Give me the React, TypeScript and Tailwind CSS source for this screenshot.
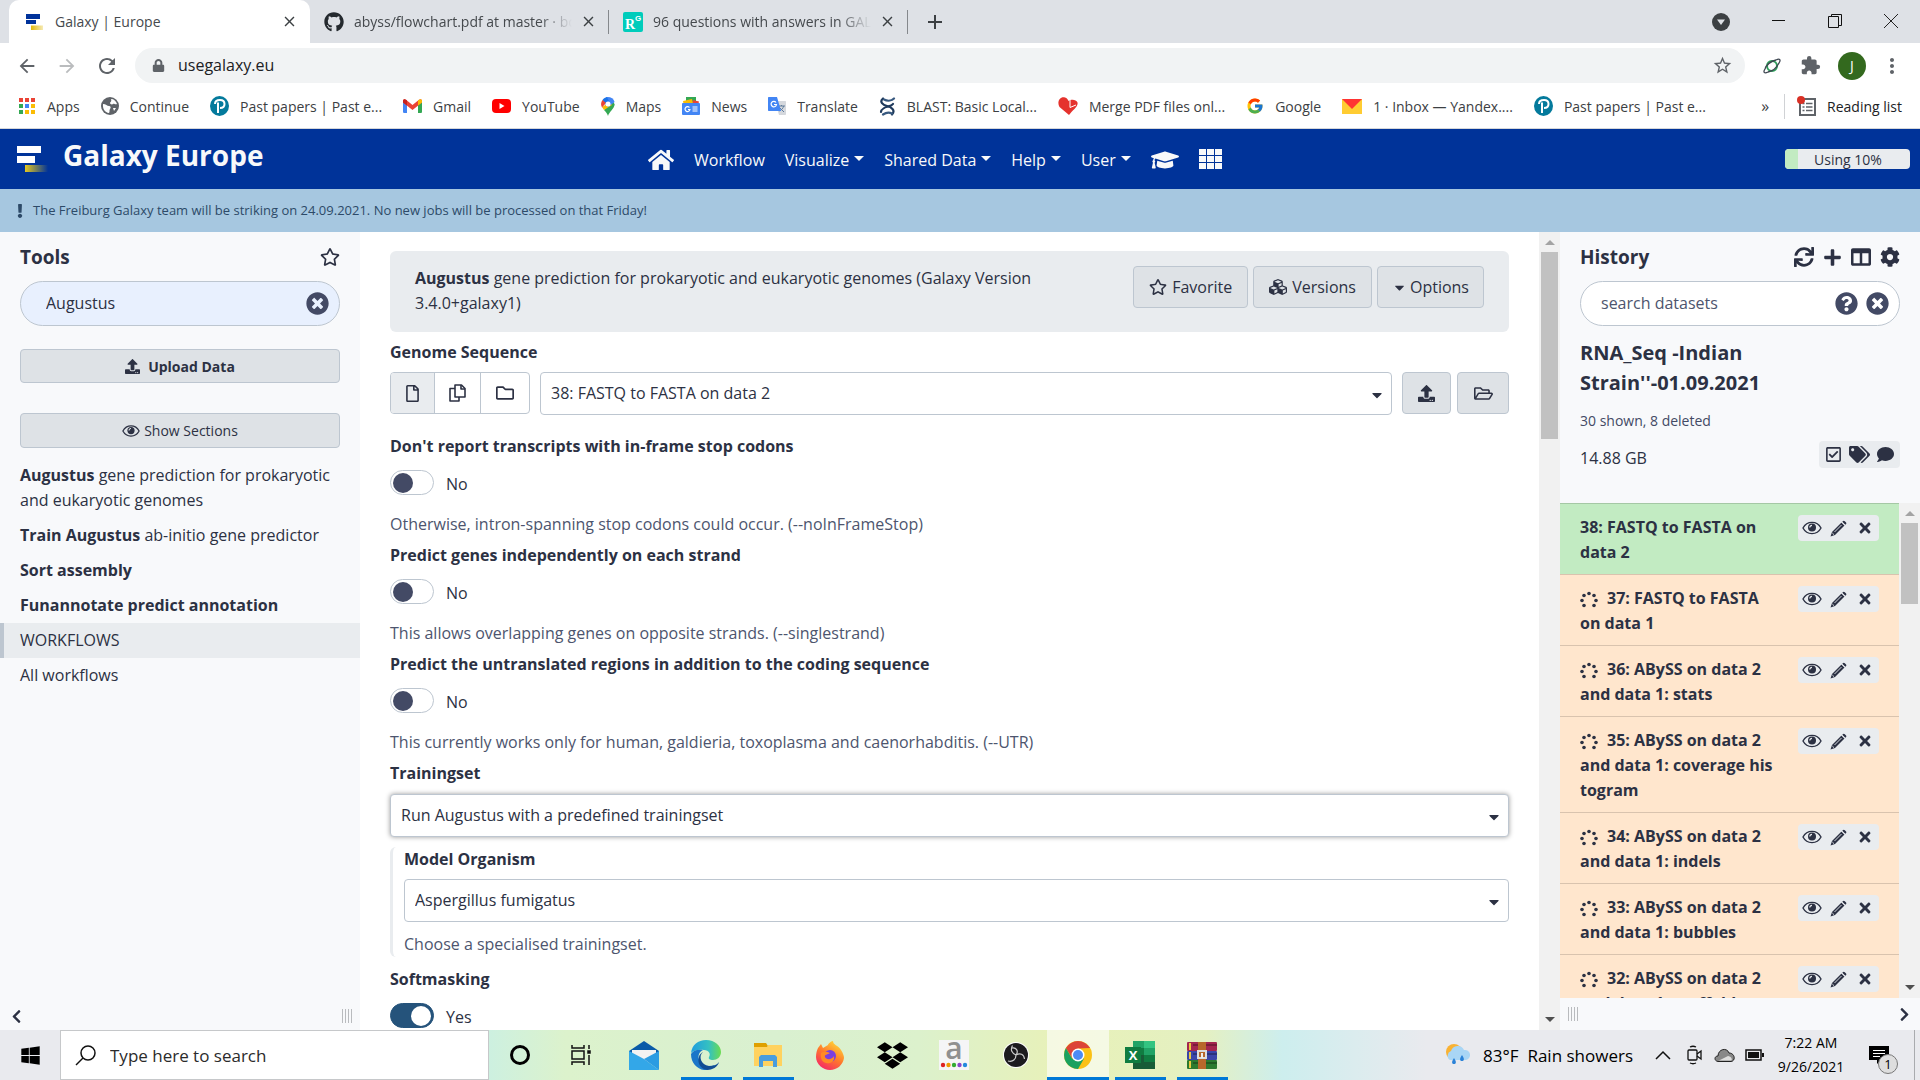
import type { ReactNode } from "react";
import {
  FaCaretDown,
  FaChevronLeft,
  FaChevronRight,
  FaCog,
  FaColumns,
  FaComment,
  FaCubes,
  FaDropbox,
  FaExclamation,
  FaGithub,
  FaGraduationCap,
  FaHome,
  FaLock,
  FaPlus,
  FaQuestionCircle,
  FaRegCheckSquare,
  FaRegFile,
  FaRegFolder,
  FaRegFolderOpen,
  FaRegStar,
  FaSync,
  FaTags,
  FaTimes,
  FaTimesCircle,
  FaUpload,
  FaWindows,
} from "react-icons/fa";
import { FcGoogle } from "react-icons/fc";
import {
  MdArrowBack,
  MdArrowForward,
  MdClose,
  MdExtension,
  MdMoreVert,
  MdRefresh,
  MdStarBorder,
} from "react-icons/md";

/* ---------- browser icons ---------- */

function Favicon() {
  return (
    <svg width="18" height="18" viewBox="0 0 18 18">
      <defs>
        <linearGradient id="fav" x1="0" x2="1">
          <stop offset="0" stopColor="#e0b90c" />
          <stop offset="1" stopColor="#e0b90c" stopOpacity="0.3" />
        </linearGradient>
      </defs>
      <path fill="#00329b" d="M1 1h14v5H1zM1 7h10v4H1z" />
      <path fill="url(#fav)" d="M6 12.500h12v4.500H6z" />
    </svg>
  );
}

function ResearchGate() {
  return (
    <svg width="20" height="20" viewBox="0 0 20 20">
      <rect width="20" height="20" rx="2" fill="#00ccbb" />
      <text x="2" y="17" fontSize="14" fontWeight="700" fontFamily="Liberation Serif, serif" fill="#fff">R</text>
      <text x="12" y="9" fontSize="8" fontWeight="700" fontFamily="Liberation Sans, sans-serif" fill="#fff">G</text>
    </svg>
  );
}

function AppsIcon() {
  const colors = ["#ea4335", "#ea4335", "#ea4335", "#34a853", "#4285f4", "#fbbc04", "#34a853", "#fbbc04", "#fbbc04"];
  return (
    <svg width="18" height="18" viewBox="0 0 18 18">
      {colors.map((c, i) => (
        <rect key={i} x={1 + (i % 3) * 6} y={1 + Math.floor(i / 3) * 6} width="4" height="4" fill={c} />
      ))}
    </svg>
  );
}

function GlobeIcon() {
  return (
    <svg width="18" height="18" viewBox="0 0 18 18">
      <circle cx="9" cy="9" r="9" fill="#5f6368" />
      <path fill="#fff" d="M2 7c3 0 4 2 6 2s2 2 1 3 0 3-1 4C4 15.500 1.500 12 2 7zM10 2c3 0 5 2 6 5-2 1-3-1-4 0s-3 0-3-1 2-1 1-4zM12 11l3 0-2 3z" />
    </svg>
  );
}

function PearsonIcon() {
  return (
    <svg width="19" height="20" viewBox="0 0 19 20">
      <ellipse cx="9.500" cy="10" rx="9.500" ry="10" fill="#047a9c" />
      <path fill="none" stroke="#fff" strokeWidth="2" d="M8 17V6.500M5 8c0-3 2-4 5-4s4.500 1.500 4.500 4-2 4-4.500 4" />
    </svg>
  );
}

function GmailIcon() {
  return (
    <svg width="19" height="14" viewBox="0 0 19 14">
      <path fill="#4285f4" d="M0 2v10.500C0 13.500.5 14 1.500 14H4V5z" />
      <path fill="#34a853" d="M19 2v10.500c0 1-.5 1.500-1.500 1.500H15V5z" />
      <path fill="#ea4335" d="M0 2C0 0 2 0 3 .800L9.500 6 16 .800C17 0 19 0 19 2v1.500L9.500 11 0 3.500z" />
      <path fill="#c5221f" d="M0 2C0 0 2 0 3 .8L4 1.600v5L0 3.500z" />
      <path fill="#fbbc04" d="M19 2c0-2-2-2-3-1.200l-1 .8v5l4-3.100z" />
    </svg>
  );
}

function YoutubeIcon() {
  return (
    <svg width="19" height="14" viewBox="0 0 19 14">
      <rect width="19" height="14" rx="4" fill="#f00" />
      <path fill="#fff" d="M7.500 4v6l5-3z" />
    </svg>
  );
}

function MapsIcon() {
  return (
    <svg width="14" height="19" viewBox="0 0 14 19">
      <path fill="#34a853" d="M7 19c1-4 6-7 6.700-11.500L12 4 3 13c2 2 3.500 4 4 6z" />
      <path fill="#fbbc04" d="M3 13 1 10l8-5 2 3z" />
      <path fill="#4285f4" d="M5 .300C9 -.5 12.500 1.500 13.600 5L7 10 4 7z" />
      <path fill="#1a73e8" d="M1.500 3C3 1 4 .500 6 .2L8 4 4.500 7z" />
      <path fill="#ea4335" d="M1.500 3l3.500 3-4 4.500C-.3 8-.3 5.500 1.500 3z" />
      <circle cx="7" cy="7" r="2.500" fill="#fff" />
    </svg>
  );
}

function NewsIcon() {
  return (
    <svg width="18" height="18" viewBox="0 0 18 18">
      <path fill="#34a853" d="M4 0h10v6H4z" />
      <path fill="#ea4335" d="m11 3 6 1.500-1 4-6-2z" />
      <path fill="#fbbc04" d="m1 4 9-2 1 5-9 2z" />
      <rect y="6" width="18" height="12" rx="1" fill="#4285f4" />
      <path fill="none" stroke="#fff" strokeWidth="1.200" d="M7.500 10.500A2.500 2.500 0 1 0 8 12.500H6M10.500 10h5M10.500 12h5M10.500 14h5" />
    </svg>
  );
}

function TranslateIcon() {
  return (
    <svg width="18" height="18" viewBox="0 0 18 18">
      <path fill="#d5d8dd" d="M7 4h10c.6 0 1 .400 1 1v12c0 .6-.4 1-1 1h-6z" />
      <path stroke="#607d9b" fill="none" d="M10 9h7M13.500 8v1M15.500 9c0 2-2 4-4 5M12 11l4 4" />
      <path fill="#4285f4" d="M1 0h8l4 14H1c-.6 0-1-.4-1-1V1c0-.6.4-1 1-1z" />
      <path stroke="#fff" strokeWidth="1.200" fill="none" d="M8 5.500A2.700 2.700 0 1 0 8.500 7.500H6" />
    </svg>
  );
}

function BlastIcon() {
  return (
    <svg width="17" height="19" viewBox="0 0 17 19" fill="none" strokeLinecap="round" strokeWidth="2.200">
      <path stroke="#1f3a5c" d="M4 1.500C0 5 4 8 8 9s9 4 5 8.500" />
      <path stroke="#38597f" d="M5 2.500c4 2 8 1 10-1M4 17.500c3-2 7-2 9-1" />
      <path stroke="#1f3a5c" d="M14 7c-1 1.500-3 2-5 2.500S2 12 2 15" />
    </svg>
  );
}

function PdfHeartIcon() {
  return (
    <svg width="20" height="18" viewBox="0 0 20 18">
      <path fill="#e5322d" d="M11 18 1.500 10C-1.500 5 2 -1 7 .500c2 .5 3 2 3.500 3.500C13 2 18 2 19.500 5.500c1 4-5 7.500-8.500 12.500z" />
      <path stroke="#fff" strokeWidth="1" fill="none" d="M12 3v7.500l6-2.500" />
    </svg>
  );
}

function YandexIcon() {
  return (
    <svg width="20" height="15" viewBox="0 0 20 15">
      <path fill="#ffcc32" d="M0 0h20v15H0z" />
      <path fill="#f33" d="M0 0h20L10 10z" />
    </svg>
  );
}

function ReadingListIcon() {
  return (
    <svg width="20" height="21" viewBox="0 0 20 21">
      <path fill="none" stroke="#5f6368" strokeWidth="2" d="M3 3h15v16H3z" />
      <path stroke="#5f6368" strokeWidth="1.500" d="M5.500 7.500h2M9 7.500h6.500M5.500 11h2M9 11h6.500M5.500 14.500h2M9 14.500h6.500" />
      <circle cx="4" cy="4" r="4" fill="#d93025" />
    </svg>
  );
}

/* ---------- galaxy icons ---------- */

function EyeIcon({ size }: { size: number }) {
  return (
    <svg width={size} height={size} viewBox="0 0 20 20" fill="none" stroke="currentColor">
      <path strokeWidth="1.400" d="M1 10c4-7.500 14-7.500 18 0-4 7.500-14 7.500-18 0z" />
      <circle cx="10" cy="9.500" r="4" fill="currentColor" stroke="none" />
      <path stroke="#e9ecef" strokeWidth="1.200" d="M7.800 9.500c0-1.300 1-2.200 2.200-2.200" />
    </svg>
  );
}

function PencilIcon() {
  return (
    <svg width="17" height="17" viewBox="0 0 17 17" fill="currentColor">
      <path d="M11.500 2.500l3 3L5 15l-4.500 1.500L2 12z" />
      <path d="M12.500 1.500c1-1 1.500-1 2.300-.300l1 1c.8.800.8 1.300-.2 2.300l-.3.300-3-3z" />
      <path stroke="#e9ecef" strokeWidth=".9" d="M4.500 12l7-7M11.500 2l3.500 3.500M2.300 13l1.700 1.700" />
    </svg>
  );
}

function CopyIcon() {
  return (
    <svg width="17" height="18" viewBox="0 0 17 18" fill="none" stroke="currentColor" strokeWidth="1.600" strokeLinejoin="round">
      <path d="M6 1h6.500L16 4.500V13H6z" />
      <path d="M12 1v4h4M6 4.500H1V17h9v-4" />
    </svg>
  );
}

/* ---------- browser chrome ---------- */

const BOOKMARKS: { icon: ReactNode; label: string }[] = [
  { icon: <AppsIcon />, label: "Apps" },
  { icon: <GlobeIcon />, label: "Continue" },
  { icon: <PearsonIcon />, label: "Past papers | Past e..." },
  { icon: <GmailIcon />, label: "Gmail" },
  { icon: <YoutubeIcon />, label: "YouTube" },
  { icon: <MapsIcon />, label: "Maps" },
  { icon: <NewsIcon />, label: "News" },
  { icon: <TranslateIcon />, label: "Translate" },
  { icon: <BlastIcon />, label: "BLAST: Basic Local..." },
  { icon: <PdfHeartIcon />, label: "Merge PDF files onl..." },
  { icon: <FcGoogle size={18} />, label: "Google" },
  { icon: <YandexIcon />, label: "1 · Inbox — Yandex...." },
  { icon: <PearsonIcon />, label: "Past papers | Past e..." },
];

function Tab({ icon, title, active, fade }: { icon: ReactNode; title: string; active?: boolean; fade?: boolean }) {
  return (
    <div
      className={
        active
          ? "flex h-full w-[301px] items-center rounded-t-[10px] bg-white pl-4 pr-3"
          : "flex h-6 w-[299px] items-center border-r border-[#85888c] pl-[14px] pr-[11px]"
      }
    >
      <span className="flex w-[30px] shrink-0">{icon}</span>
      <span
        className={
          "flex-1 overflow-hidden whitespace-nowrap text-[14px] leading-6 text-[#45494d] " +
          (fade ? "[mask-image:linear-gradient(to_right,black_85%,transparent)]" : "")
        }
      >
        {title}
      </span>
      <button aria-label="Close tab" className="ml-2 text-[#3c4043]">
        <MdClose size={17} />
      </button>
    </div>
  );
}

function Browser() {
  return (
    <div className="shrink-0 border-b border-[#d5d7da] bg-white">
      <div className="flex h-[43px] items-center bg-[#dee1e6] pl-[9px]">
        <Tab active icon={<Favicon />} title="Galaxy | Europe" />
        <Tab fade icon={<FaGithub size={20} className="text-[#24292e]" />} title="abyss/flowchart.pdf at master · bcgsc" />
        <Tab fade icon={<ResearchGate />} title="96 questions with answers in GALAXY" />
        <button aria-label="New tab" className="ml-[18px]">
          <svg width="18" height="18" stroke="#3c4043" strokeWidth="2">
            <path d="M9 2v14M2 9h14" />
          </svg>
        </button>
        <div className="ml-auto flex items-center gap-[42px] pr-[22px]">
          <svg width="18" height="18" viewBox="0 0 18 18">
            <circle cx="9" cy="9" r="9" fill="#3c4043" />
            <path fill="#dee1e6" d="M5 6.500h8L9 12z" />
          </svg>
          <svg width="14" height="14" stroke="#111">
            <path d="M0 5.500h13" />
          </svg>
          <svg width="14" height="16" fill="none" stroke="#111">
            <path d="M.5 2.500h10v11H.5zM3.500 2V.5h10v11H11" />
          </svg>
          <svg width="14" height="16" stroke="#222">
            <path d="M0 0l14 14M14 0 0 14" />
          </svg>
        </div>
      </div>
      <div className="flex h-[45px] items-center pl-4 pr-4 text-[#5f6368]">
        <button aria-label="Back"><MdArrowBack size={22} /></button>
        <button aria-label="Forward" className="ml-[18px] text-[#babcbe]"><MdArrowForward size={22} /></button>
        <button aria-label="Reload" className="ml-[17px]"><MdRefresh size={24} /></button>
        <div className="ml-4 flex h-[35px] flex-1 items-center rounded-full bg-[#f1f3f4] pl-[17px] pr-3">
          <FaLock size={13} />
          <input
            aria-label="Address"
            defaultValue="usegalaxy.eu"
            className="ml-[13px] flex-1 bg-transparent text-[16px] text-[#202124] outline-none"
          />
          <MdStarBorder size={21} />
        </div>
        <svg width="20" height="20" viewBox="0 0 20 20" fill="none" className="ml-[17px]">
          <circle cx="10" cy="10" r="5" stroke="#2e9e5b" strokeWidth="2" />
          <path stroke="#3d4650" strokeWidth="1.300" d="M6 16c-4 2-5 0-3-3M14 4c4-2 5 0 3 3-2 4-6 8-11 9M3 13c1-4 6-8 11-9" />
        </svg>
        <MdExtension size={21} className="ml-[18px]" />
        <span className="ml-[17px] flex size-7 items-center justify-center rounded-full bg-[#33691e] text-[14px] text-white">J</span>
        <MdMoreVert size={24} className="ml-[14px]" />
      </div>
      <div className="flex h-10 items-center pb-1 pl-[18px] pr-[18px] text-[14px] text-[#3c4043]">
        <div className="flex flex-1 items-center gap-[21px]">
          {BOOKMARKS.map((b, i) => (
            <a key={i} href="#" className="flex items-center gap-[11px] whitespace-nowrap">
              {b.icon}
              {b.label}
            </a>
          ))}
        </div>
        <span className="text-[16px]">»</span>
        <a href="#" className="ml-[15px] flex items-center gap-[10px] whitespace-nowrap border-l border-[#d0d2d5] pl-3 text-[#202124]">
          <ReadingListIcon />
          Reading list
        </a>
      </div>
    </div>
  );
}

/* ---------- galaxy ---------- */

function Masthead() {
  return (
    <header className="flex h-[60px] shrink-0 items-center bg-[#003399] text-[16px] text-[#f8f9fa]">
      <a href="#" className="flex w-1/3 items-center gap-[14px] pl-4">
        <svg width="33" height="30" viewBox="0 0 33 30">
          <defs>
            <linearGradient id="brand" x1="0" x2="1">
              <stop offset="0" stopColor="#e5c81e" />
              <stop offset="1" stopColor="#e5c81e" stopOpacity="0" />
            </linearGradient>
          </defs>
          <path fill="#fff" d="M1 2h24v7H1zM1 12h18v7H1z" />
          <path fill="url(#brand)" d="M9 21h23v7H9z" />
        </svg>
        <span className="pb-2 text-[28px] font-bold">Galaxy Europe</span>
      </a>
      <nav className="flex items-center gap-5 whitespace-nowrap pl-2 pt-[2px] font-medium">
        <a href="#" aria-label="Home"><FaHome size={26} /></a>
        <a href="#">Workflow</a>
        {["Visualize", "Shared Data", "Help", "User"].map((item) => (
          <a key={item} href="#" className="flex items-center gap-[5px]">
            {item}
            <svg width="10" height="8" fill="currentColor"><path d="M0 0h10L5 5z" /></svg>
          </a>
        ))}
        <a href="#" aria-label="Training"><FaGraduationCap size={28} /></a>
        <a href="#" aria-label="Applications">
          <svg width="24" height="24" fill="currentColor">
            {[0, 1, 2, 3, 4, 5, 6, 7, 8].map((i) => (
              <rect key={i} x={(i % 3) * 8} y={1 + Math.floor(i / 3) * 7} width="7" height="6" />
            ))}
          </svg>
        </a>
      </nav>
      <div className="ml-auto mr-[10px] flex h-5 w-[125px] items-center overflow-hidden rounded bg-[#e9ecef] text-[14px] text-[#2c3143]">
        <span className="h-full w-[13px] bg-[#c2ebc2]" />
        <span className="flex-1 pr-3 text-center">Using 10%</span>
      </div>
    </header>
  );
}

const grayButton = "flex items-center justify-center rounded border border-[#bdc6d0] bg-[#dee2e6] text-[#2c3143]";

function Grip() {
  return (
    <svg width="10" height="14" stroke="#b9bbbe">
      <path d="M.5 0v14M3.500 0v14M6.500 0v14M9.500 0v14" />
    </svg>
  );
}

function Scrollbar({ thumb }: { thumb: string }) {
  return (
    <div className="flex w-[21px] shrink-0 flex-col items-center bg-[#f1f1f1]">
      <svg width="10" height="20" className="shrink-0"><path fill="#a3a3a3" d="M0 13h10L5 8z" /></svg>
      <div className={"w-[17px] bg-[#c1c1c1] " + thumb} />
      <svg width="10" height="20" className="mt-auto shrink-0"><path fill="#505050" d="M0 7h10l-5 5z" /></svg>
    </div>
  );
}

const TOOLS = [
  { name: "Augustus", text: "gene prediction for prokaryotic and eukaryotic genomes" },
  { name: "Train Augustus", text: "ab-initio gene predictor" },
  { name: "Sort assembly", text: "" },
  { name: "Funannotate predict annotation", text: "" },
];

function ToolPanel() {
  return (
    <aside className="flex w-[360px] shrink-0 flex-col bg-[#f8f9fb]">
      <div className="flex-1 pt-[10px]">
        <div className="px-5">
          <div className="flex h-[30px] items-center justify-between">
            <h2 className="text-[19px] font-bold">Tools</h2>
            <button aria-label="Favorites"><FaRegStar size={20} /></button>
          </div>
          <div className="mt-[9px] flex h-[45px] items-center rounded-full border border-[#bdc6d0] bg-[#e8f0fe] pl-[25px] pr-[10px]">
            <input aria-label="Search tools" defaultValue="Augustus" className="min-w-0 flex-1 bg-transparent outline-none" />
            <button aria-label="Clear" className="text-[#434a65]"><FaTimesCircle size={23} /></button>
          </div>
          <button className={grayButton + " mt-[23px] h-[34px] w-full gap-2 text-[14px] font-bold"}>
            <FaUpload size={15} />
            Upload Data
          </button>
          <button className={grayButton + " mt-[30px] h-[35px] w-full gap-1 text-[14px]"}>
            <EyeIcon size={18} />
            Show Sections
          </button>
        </div>
        <ul className="mt-[10px]">
          {TOOLS.map((t) => (
            <li key={t.name} className="px-5 py-[5px]">
              <a href="#"><b>{t.name}</b> {t.text}</a>
            </li>
          ))}
          <li className="border-l-4 border-[#bdc6d0] bg-[#e9ecef] py-[5px] pl-4 font-medium">WORKFLOWS</li>
          <li className="px-5 py-[5px]"><a href="#">All workflows</a></li>
        </ul>
      </div>
      <div className="flex h-7 items-center justify-between pl-[9px] pr-2">
        <button aria-label="Collapse tools"><FaChevronLeft size={15} /></button>
        <Grip />
      </div>
    </aside>
  );
}

function Select({ id, value, focused }: { id: string; value: string; focused?: boolean }) {
  return (
    <div className="relative flex-1">
      <select
        id={id}
        className={
          "h-[43px] w-full appearance-none rounded border border-[#bdc6d0] bg-white px-[10px] outline-none " +
          (focused ? "shadow-[0_0_5px_rgba(0,0,0,0.4)]" : "")
        }
      >
        <option>{value}</option>
      </select>
      <FaCaretDown size={16} className="pointer-events-none absolute right-[7px] top-[15px]" />
    </div>
  );
}

function Toggle({ id, label, help, on }: { id: string; label: string; help?: string; on?: boolean }) {
  return (
    <div className="mb-[6px]">
      <label htmlFor={id} className="block font-bold">{label}</label>
      <div className="mt-[11px] flex h-[25px] items-center gap-3">
        <input
          id={id}
          type="checkbox"
          defaultChecked={on}
          className="flex h-[25px] w-[44px] appearance-none items-center rounded-full border border-[#bdc6d0] bg-white px-[2px] before:size-5 before:rounded-full before:bg-[#434a65] checked:justify-end checked:border-[#25537b] checked:bg-[#25537b] checked:before:bg-white"
        />
        <span className="pt-1">{on ? "Yes" : "No"}</span>
      </div>
      {help && <p className="mt-[17px] text-[#4d556e]">{help}</p>}
    </div>
  );
}

function ToolForm() {
  return (
    <main className="flex min-w-0 flex-1 bg-white">
      <form className="min-w-0 flex-1 overflow-hidden px-[30px] pt-[19px]">
        <div className="flex h-[81px] items-start justify-between rounded-md bg-[#e9ecef] px-[25px] pt-[15px]">
          <h1 className="max-w-[660px]">
            <b>Augustus</b> gene prediction for prokaryotic and eukaryotic genomes (Galaxy Version 3.4.0+galaxy1)
          </h1>
          <div className="flex gap-[5px]">
            <button type="button" className={grayButton + " h-[42px] gap-[5px] px-[15px]"}>
              <FaRegStar size={18} /> Favorite
            </button>
            <button type="button" className={grayButton + " h-[42px] gap-[5px] px-[15px]"}>
              <FaCubes size={18} /> Versions
            </button>
            <button type="button" className={grayButton + " h-[42px] gap-[3px] px-[14px]"}>
              <FaCaretDown size={15} /> Options
            </button>
          </div>
        </div>

        <label htmlFor="genome" className="mt-2 block font-bold">Genome Sequence</label>
        <div className="mt-[7px] flex">
          <div className="mr-[10px] flex h-[42px] divide-x divide-[#bdc6d0] overflow-hidden rounded border border-[#bdc6d0]">
            <button type="button" aria-label="Single dataset" className="bg-[#e9ecef] px-[13px]"><FaRegFile size={17} /></button>
            <button type="button" aria-label="Multiple datasets" className="px-[14px]"><CopyIcon /></button>
            <button type="button" aria-label="Dataset collection" className="px-[15px]"><FaRegFolder size={18} /></button>
          </div>
          <Select id="genome" value="38: FASTQ to FASTA on data 2" />
          <button type="button" aria-label="Upload" className={grayButton + " ml-[10px] h-[42px] w-[49px]"}><FaUpload size={17} /></button>
          <button type="button" aria-label="Browse" className={grayButton + " ml-[6px] h-[42px] w-[52px]"}><FaRegFolderOpen size={19} /></button>
        </div>

        <div className="mt-[19px]">
          <Toggle id="noinframe" label="Don't report transcripts with in-frame stop codons" help="Otherwise, intron-spanning stop codons could occur. (--noInFrameStop)" />
          <Toggle id="singlestrand" label="Predict genes independently on each strand" help="This allows overlapping genes on opposite strands. (--singlestrand)" />
          <Toggle id="utr" label="Predict the untranslated regions in addition to the coding sequence" help="This currently works only for human, galdieria, toxoplasma and caenorhabditis. (--UTR)" />
        </div>

        <label htmlFor="training" className="block font-bold">Trainingset</label>
        <div className="mt-2 flex"><Select id="training" value="Run Augustus with a predefined trainingset" focused /></div>
        <div className="mb-[10px] mt-[10px] rounded-md border-l-[3px] border-[#e9ecef] pl-[11px]">
          <label htmlFor="organism" className="block font-bold">Model Organism</label>
          <div className="mt-[7px] flex"><Select id="organism" value="Aspergillus fumigatus" /></div>
          <p className="mt-[10px] text-[#4d556e]">Choose a specialised trainingset.</p>
        </div>
        <Toggle id="softmasking" label="Softmasking" on />
      </form>
      <Scrollbar thumb="h-[187px]" />
    </main>
  );
}

const DATASETS = [
  { lines: ["38: FASTQ to FASTA on", "data 2"], done: true },
  { lines: ["37: FASTQ to FASTA", "on data 1"] },
  { lines: ["36: ABySS on data 2", "and data 1: stats"] },
  { lines: ["35: ABySS on data 2", "and data 1: coverage his", "togram"] },
  { lines: ["34: ABySS on data 2", "and data 1: indels"] },
  { lines: ["33: ABySS on data 2", "and data 1: bubbles"] },
  { lines: ["32: ABySS on data 2", "and data 1: scaffolds"] },
];

function Spinner() {
  const dots = [[9, 2.500], [14, 4.500], [16, 9.500], [14, 14.500], [4, 14.500], [2, 9.500], [4, 4.500]];
  return (
    <svg width="18" height="18" className="mr-[9px] inline-block" fill="#2c3143">
      {dots.map(([x, y]) => (
        <circle key={x + "-" + y} cx={x} cy={y} r="1.800" />
      ))}
    </svg>
  );
}

function HistoryPanel() {
  return (
    <aside className="flex w-[360px] shrink-0 flex-col bg-[#f8f9fb]">
      <div className="h-[271px] shrink-0 px-5 pt-[10px]">
        <div className="flex h-[30px] items-center justify-between">
          <h2 className="text-[19px] font-bold">History</h2>
          <div className="flex items-center gap-[9px]">
            <button aria-label="Refresh"><FaSync size={20} /></button>
            <button aria-label="New history"><FaPlus size={19} /></button>
            <button aria-label="All histories"><FaColumns size={20} /></button>
            <button aria-label="History options"><FaCog size={20} /></button>
          </div>
        </div>
        <div className="mt-[9px] flex h-[45px] items-center gap-2 rounded-full border border-[#bdc6d0] bg-white pl-5 pr-[10px] text-[#434a65]">
          <input aria-label="Search datasets" placeholder="search datasets" className="min-w-0 flex-1 bg-transparent outline-none placeholder:text-[#4d556e]" />
          <button aria-label="Search help"><FaQuestionCircle size={23} /></button>
          <button aria-label="Clear search"><FaTimesCircle size={23} /></button>
        </div>
        <h3 className="mt-3 w-[240px] text-[20px] font-bold leading-[30px]">RNA_Seq -Indian Strain''-01.09.2021</h3>
        <p className="mt-[10px] text-[14px] text-[#434a65]">30 shown, 8 deleted</p>
        <div className="mt-2 flex items-start justify-between">
          <p className="pt-[5px]">14.88 GB</p>
          <div className="flex h-[27px] items-center gap-[7px] rounded bg-[#e9ecef] px-[6px]">
            <button aria-label="Select datasets"><FaRegCheckSquare size={17} /></button>
            <button aria-label="Tags"><FaTags size={21} /></button>
            <button aria-label="Annotation"><FaComment size={17} /></button>
          </div>
        </div>
      </div>
      <div className="flex min-h-0 flex-1">
        <ul className="flex-1 overflow-hidden">
          {DATASETS.map((d) => (
            <li
              key={d.lines[0]}
              className={
                "flex items-start justify-between border-t border-black/15 pb-[9px] pl-5 pr-5 pt-[11px] " +
                (d.done ? "bg-[#c2ebc2]" : "bg-[#ffe6cd]")
              }
            >
              <div className="whitespace-nowrap font-bold">
                {d.lines.map((line, i) => (
                  <div key={line}>
                    {i === 0 && !d.done && <Spinner />}
                    {line}
                  </div>
                ))}
              </div>
              <div className="flex h-[26px] items-center gap-2 rounded bg-[#e9ecef] px-1">
                <button aria-label="View data"><EyeIcon size={20} /></button>
                <button aria-label="Edit attributes"><PencilIcon /></button>
                <button aria-label="Delete" className="px-[2px]"><FaTimes size={16} /></button>
              </div>
            </li>
          ))}
        </ul>
        <Scrollbar thumb="h-[81px]" />
      </div>
      <div className="flex h-8 shrink-0 items-center justify-between pl-2 pr-2">
        <Grip />
        <button aria-label="Collapse history"><FaChevronRight size={15} /></button>
      </div>
    </aside>
  );
}

/* ---------- taskbar ---------- */

function TaskViewIcon() {
  return (
    <svg width="22" height="22" fill="none" stroke="#111" strokeWidth="1.500">
      <path d="M1 1v3h12V1M1 7h12v8H1zM1 21v-3h12v3M18 1v4M18 11v10" />
      <path fill="#111" d="M17 7h2v2h-2z" />
    </svg>
  );
}

function MailIcon() {
  return (
    <svg width="30" height="29" viewBox="0 0 30 29">
      <path fill="#0a5ba8" d="M0 10 15 0l15 10v6H0z" />
      <path fill="#f2f2f2" d="M3 9h24v9L15 22 3 18z" />
      <path fill="#33a7e8" d="M0 10l15 8 15 11H0z" />
      <path fill="#2b9ce2" d="M30 10v19L15 18z" />
    </svg>
  );
}

function EdgeIcon() {
  return (
    <svg width="30" height="30" viewBox="0 0 30 30">
      <defs>
        <linearGradient id="edge" x1="0" x2="1">
          <stop offset="0" stopColor="#1f9de0" />
          <stop offset=".6" stopColor="#35c1c0" />
          <stop offset="1" stopColor="#6bdc50" />
        </linearGradient>
      </defs>
      <path fill="url(#edge)" d="M0 13C1 5 7 0 15 0c9 0 15 6 15 12 0 5-4 8-8 8-3 0-5-1-4-3 2-3 0-7-5-7C7 9 2 11 0 13z" />
      <path fill="#1b76c9" d="M0 14c2-4 7-5 12-4-5 2-6 8-2 13 3 4 9 4 14 2-3 4-7 5-11 5C6 29 0 23 0 14z" />
      <path fill="#124d94" d="M12 12c-5 4-2 13 6 14 4 0 8-1 10-4-1 5-7 8-12 8-7-1-10-8-8-13 0-2 2-4 4-5z" />
    </svg>
  );
}

function ExplorerIcon() {
  return (
    <svg width="28" height="24" viewBox="0 0 28 24">
      <path fill="#dfa000" d="M0 0h12l2 3v4H0z" />
      <path fill="#ffd25f" d="M0 4h13l1-2h14v21H0z" />
      <path fill="#4a9ddd" d="M5 24V14l2-2h14l2 2v10h-4v-6H9v6z" />
    </svg>
  );
}

function FirefoxIcon() {
  return (
    <svg width="28" height="29" viewBox="0 0 28 29">
      <defs>
        <linearGradient id="fox" x1=".8" y1="0" x2=".2" y2="1">
          <stop offset="0" stopColor="#ffdf3a" />
          <stop offset=".5" stopColor="#ff7a2b" />
          <stop offset="1" stopColor="#f5216b" />
        </linearGradient>
      </defs>
      <path fill="url(#fox)" d="M2 7l3-4 2 4 5-3c0-1 3-4 5-4 0 4 5 4 8 9 2 3 3 6 3 8-1 7-7 12-14 12S0 23 0 16c0-4 1-7 2-9z" />
      <circle cx="14" cy="15" r="6" fill="#7a3fe0" />
      <path fill="#ff8a25" d="M5 12c3-2 6-1 9 0-2 2-6 1-5 4s7 3 9-1c1 6-4 8-8 7s-6-5-5-10z" />
    </svg>
  );
}

function AlexaIcon() {
  const dots = ["#d22", "#e90", "#3a3", "#84c", "#28d"];
  return (
    <svg width="30" height="30" viewBox="0 0 30 30">
      <path fill="#f5f5f6" d="M0 0h30v30H0z" />
      <text x="15" y="19" textAnchor="middle" fontSize="30" fontWeight="600" fontFamily="Open Sans, sans-serif" fill="#909090">a</text>
      {dots.map((c, i) => (
        <circle key={c} cx={4 + i * 5.500} cy="25" r="2.200" fill={c} />
      ))}
    </svg>
  );
}

function ObsIcon() {
  return (
    <svg width="26" height="26" viewBox="0 0 26 26">
      <circle cx="13" cy="13" r="13" fill="#fff" />
      <circle cx="13" cy="13" r="12" fill="#1c1b1e" />
      <path fill="none" stroke="#ccc" strokeWidth="1.200" d="M13 13C9 11 7 8 9.500 3.500M13 13c0 4-3 7.500-8 6M13 13c4-2.500 8-1 8.500 4M9 6c4-1 7 3 4 7" />
    </svg>
  );
}

function ChromeIcon() {
  return (
    <svg width="28" height="28" viewBox="0 0 28 28">
      <circle cx="14" cy="14" r="14" fill="#fbc116" />
      <path fill="#dc4437" d="M1.900 7A14 14 0 0 1 26.100 7L14 7.500 8 17z" />
      <path fill="#1aa15f" d="M1.900 7A14 14 0 0 0 14 28l6-10.500-12 0z" />
      <circle cx="14" cy="14" r="6.500" fill="#fff" />
      <circle cx="14" cy="14" r="5" fill="#4c8bf5" />
    </svg>
  );
}

function ExcelIcon() {
  return (
    <svg width="30" height="28" viewBox="0 0 30 28">
      <path fill="#21a366" d="M8 0h22v14H8z" />
      <path fill="#107c41" d="M8 7h11v14H8z" />
      <path fill="#33c481" d="M19 0h11v7H19z" />
      <path fill="#185c37" d="M8 21h22v7H8zM8 14h11v7H8z" />
      <path fill="#107c41" d="M19 14h11v7H19zM0 6h16v16H0z" />
      <text x="8" y="19" textAnchor="middle" fontSize="13" fontWeight="700" fontFamily="Open Sans, sans-serif" fill="#fff">X</text>
    </svg>
  );
}

function WinrarIcon() {
  return (
    <svg width="30" height="27" viewBox="0 0 30 27">
      <rect width="30" height="9" rx="1" fill="#a3264f" />
      <rect y="9" width="30" height="9" rx="1" fill="#3b45a8" />
      <rect y="18" width="30" height="9" rx="1" fill="#2c7a2f" />
      <path stroke="#e9c83e" strokeWidth="2" d="M3 1v7M3 10v7M3 19v7" />
      <path stroke="#000" strokeOpacity=".35" strokeWidth="1.500" d="M6 3h24M6 12h24M6 21h24" />
      <path fill="#b8682b" d="M11 0h8v27h-8z" />
      <path fill="none" stroke="#ddd" strokeWidth="2" d="M11 9h8v7h-8z" />
      <path stroke="#eee" strokeWidth="2" d="M15 11v5" />
    </svg>
  );
}

const TASKS: { name: string; icon: ReactNode; open?: boolean; active?: boolean }[] = [
  { name: "Cortana", icon: <span className="size-5 rounded-full border-[3px] border-black" /> },
  { name: "Task View", icon: <TaskViewIcon /> },
  { name: "Mail", icon: <MailIcon /> },
  { name: "Edge", icon: <EdgeIcon />, open: true },
  { name: "Explorer", icon: <ExplorerIcon />, open: true },
  { name: "Firefox", icon: <FirefoxIcon /> },
  { name: "Dropbox", icon: <FaDropbox size={31} /> },
  { name: "Amazon Assistant", icon: <AlexaIcon /> },
  { name: "OBS", icon: <ObsIcon /> },
  { name: "Chrome", icon: <ChromeIcon />, active: true },
  { name: "Excel", icon: <ExcelIcon />, open: true },
  { name: "WinRAR", icon: <WinrarIcon />, open: true },
];

function Taskbar() {
  return (
    <footer className="flex h-[50px] shrink-0 bg-[#e9eaee] text-black">
      <button aria-label="Start" className="flex w-[60px] items-center justify-center"><FaWindows size={21} /></button>
      <label className="flex w-[429px] items-center gap-[14px] border border-[#c6c8ca] bg-white pl-[14px]">
        <svg width="21" height="21" fill="none" stroke="#111" strokeWidth="1.500">
          <circle cx="13" cy="8" r="7" />
          <path d="M8 13l-7 7" />
        </svg>
        <input aria-label="Search" placeholder="Type here to search" className="flex-1 bg-transparent text-[17px] outline-none placeholder:text-[#2b2b2b]" />
      </label>
      <div className="flex flex-1 bg-[linear-gradient(to_right,#cdf0e0,#dcf2cc_8%,#d9f0d0_30%,#dcf1cc_45%,#e8f1b8_60%,#e4f0c2_75%,#cdeeee_83%,#e9eaee_98%)]">
        {TASKS.map((t) => (
          <button
            key={t.name}
            aria-label={t.name}
            className={"flex w-[62px] flex-col items-center " + (t.active ? "bg-white/60" : "")}
          >
            <span className="flex flex-1 items-center">{t.icon}</span>
            {t.open && <span className="-mt-[3px] h-[3px] w-[51px] bg-[#0078d7]" />}
            {t.active && <span className="-mt-[3px] h-[3px] w-full bg-[#0078d7]" />}
          </button>
        ))}
      </div>
      <div className="flex items-center">
        <button className="flex items-center gap-3 whitespace-nowrap text-[17px]">
          <svg width="26" height="22" viewBox="0 0 26 22">
            <circle cx="9" cy="8" r="8" fill="#f9b233" />
            <path fill="#a9d6f5" d="M5 16a5 5 0 0 1 1-9 7 7 0 0 1 13-1 5 5 0 0 1 2 10z" />
            <path fill="#2b83d8" d="M9 14c-3 4-2 6 0 6s3-2 0-6zM17 11c-3 4-2 6 0 6s3-2 0-6z" />
          </svg>
          <span className="whitespace-pre">83°F  Rain showers</span>
        </button>
        <svg width="16" height="10" fill="none" stroke="#111" strokeWidth="1.500" className="ml-[22px]"><path d="M1 9l7-7 7 7" /></svg>
        <svg width="15" height="20" fill="none" stroke="#111" strokeWidth="1.300" className="ml-4">
          <rect x="1" y="5" width="9" height="10" rx="1" />
          <path d="M10 9l4-3v8l-4-3M3 2c2-1 4-1 6 0M3 18c2 1 4 1 6 0" />
        </svg>
        <svg width="21" height="15" viewBox="0 0 21 15" className="ml-3">
          <path fill="#888" stroke="#222" d="M4 13.500C0 13 0 8 4 8c0-7 9-9 11-3 6 0 7 8 2 8.500z" />
          <path fill="#ddd" d="M5 12.500 14 8c3 0 5 4 3 4.500z" />
        </svg>
        <svg width="19" height="12" className="ml-[10px]">
          <path fill="none" stroke="#111" strokeWidth="1.500" d="M1 1h15v10H1z" />
          <path fill="#111" d="M3 3h11v6H3zM17 4h2v4h-2z" />
        </svg>
        <div className="ml-[13px] w-[68px] whitespace-nowrap text-center text-[14px] leading-6">
          <div>7:22 AM</div>
          <div>9/26/2021</div>
        </div>
        <button aria-label="Notifications" className="relative ml-6 mr-[25px]">
          <svg width="20" height="18"><path d="M0 0h20v14h-8l-4 4v-4H0z" /><path stroke="#fff" d="M4 4.500h12M4 7.500h12M4 10.500h7" /></svg>
          <span className="absolute left-[9px] top-2 flex size-5 items-center justify-center rounded-full border border-[#777] bg-[#dedede] text-[13px]">1</span>
        </button>
        <div className="h-full w-[6px] border-l border-[#a9abae]" />
      </div>
    </footer>
  );
}

export default function App() {
  return (
    <div className="flex h-screen flex-col overflow-hidden font-['Open_Sans','Noto_Sans',sans-serif] text-[16px] leading-[25px] text-[#2c3143]">
      <Browser />
      <Masthead />
      <div className="flex h-[43px] shrink-0 items-center gap-[6px] bg-[#a6c7e0] pl-[13px] text-[13px] text-[#2d4a68]">
        <FaExclamation size={14} />
        The Freiburg Galaxy team will be striking on 24.09.2021. No new jobs will be processed on that Friday!
      </div>
      <div className="flex min-h-0 flex-1">
        <ToolPanel />
        <ToolForm />
        <HistoryPanel />
      </div>
      <Taskbar />
    </div>
  );
}
